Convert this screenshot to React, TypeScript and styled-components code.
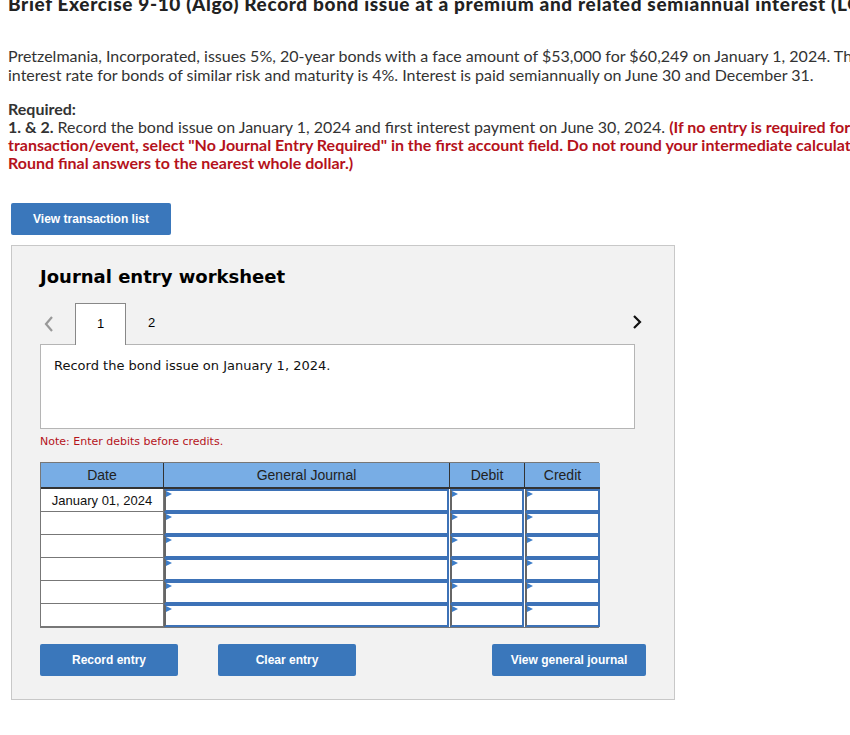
import React from "react";
import styled, { createGlobalStyle } from "styled-components";

const Global = createGlobalStyle`
  html, body { margin: 0; padding: 0; background: #fff; }
  body { overflow: hidden; }
`;

const Page = styled.div`
  width: 850px;
  height: 735px;
  overflow: hidden;
  padding: 0 0 0 8px;
  box-sizing: border-box;
  font-family: Lato, "Open Sans", sans-serif;
  color: #333;
`;

const Title = styled.h1`
  margin: -7px 0 0 0;
  font-family: Lato, sans-serif;
  font-size: 19px;
  font-weight: 900;
  letter-spacing: 0.65px;
  line-height: 22px;
  white-space: nowrap;
  color: #222;
`;

const Intro = styled.p`
  margin: 31px 0 0 0;
  font-size: 16px;
  line-height: 19px;
  white-space: nowrap;
  color: #333;
`;

const Required = styled.div`
  margin-top: 16px;
  font-size: 16px;
  line-height: 18px;
  white-space: nowrap;
  color: #333;
`;

const Strong = styled.span`
  font-weight: 700;
`;

const Red = styled.span`
  font-weight: 700;
  color: #b5121b;
`;

const BlueButton = styled.button<{ $w: number }>`
  display: inline-flex;
  align-items: center;
  justify-content: center;
  width: ${(p) => p.$w}px;
  height: 32px;
  padding: 0;
  border: none;
  border-radius: 2px;
  background: #3a77bb;
  color: #fff;
  font-family: "Liberation Sans", Arial, sans-serif;
  font-weight: 700;
  font-size: 12px;
  cursor: pointer;
`;

const TopButtonRow = styled.div`
  margin: 31px 0 0 3px;
`;

const Panel = styled.div`
  margin: 10px 0 0 3px;
  width: 664px;
  height: 455px;
  box-sizing: border-box;
  background: #f2f2f2;
  border: 1px solid #c8c8c8;
  padding: 17px 0 0 28px;
`;

const WsTitle = styled.h2`
  margin: 0;
  font-family: "DejaVu Sans", Verdana, sans-serif;
  font-weight: 700;
  font-size: 18px;
  line-height: 28px;
  color: #000;
`;

const TabRow = styled.div`
  margin-top: 12px;
  width: 607px;
  height: 41px;
  display: flex;
  align-items: stretch;
  position: relative;
`;

const Arrow = styled.div`
  width: 35px;
  display: flex;
  align-items: center;
  padding-left: 3px;
  box-sizing: border-box;
`;

const Tab = styled.div<{ $active?: boolean }>`
  width: 51px;
  box-sizing: border-box;
  display: flex;
  align-items: center;
  justify-content: center;
  font-family: "Liberation Sans", Arial, sans-serif;
  font-size: 13px;
  color: #000;
  padding-bottom: 3px;
  background: ${(p) => (p.$active ? "#fff" : "transparent")};
  border: ${(p) => (p.$active ? "1px solid #888" : "none")};
  border-bottom: none;
  margin-bottom: ${(p) => (p.$active ? "-1px" : "0")};
  position: relative;
  z-index: 1;
`;

const TabSpacer = styled.div`
  flex: 1;
`;

const RightArrow = styled.div`
  width: 20px;
  display: flex;
  align-items: center;
  justify-content: center;
  padding-bottom: 4px;
`;

const DescBox = styled.div`
  width: 595px;
  height: 85px;
  box-sizing: border-box;
  background: #fff;
  border: 1px solid #b5b5b5;
  padding: 13px 13px;
  font-family: "DejaVu Sans", Verdana, sans-serif;
  font-size: 13px;
  color: #111;
`;

const Note = styled.div`
  margin-top: 6px;
  font-family: "DejaVu Sans", Verdana, sans-serif;
  font-size: 11px;
  color: #b5121b;
`;

const Grid = styled.div`
  margin-top: 14px;
  width: 559px;
  box-sizing: border-box;
  display: grid;
  grid-template-columns: 123px 286px 75px 75px;
  grid-template-rows: 26px repeat(6, 23px);
  border: 1px solid #777;
  background: #fff;
  font-family: "Liberation Sans", Arial, sans-serif;
  font-size: 13px;
  color: #111;
`;

const HeadCell = styled.div<{ $last?: boolean }>`
  box-sizing: border-box;
  display: flex;
  align-items: center;
  justify-content: center;
  background: #78ade5;
  color: #222;
  font-size: 14px;
  border-bottom: 2px solid #333;
  border-right: ${(p) => (p.$last ? "none" : "1px solid #333")};
`;

const DateCell = styled.div`
  box-sizing: border-box;
  display: flex;
  align-items: center;
  justify-content: center;
  border-right: 1px solid #777;
  border-bottom: 1px solid #777;
`;

const InputCell = styled.div<{ $last?: boolean }>`
  position: relative;
  box-sizing: border-box;
  border: 2px solid #3d72b7;
  border-left-color: #666;
  margin-right: ${(p) => (p.$last ? "0" : "1px")};
  &::before {
    content: "";
    position: absolute;
    top: 0;
    left: 0;
    border-left: 6px solid #3d7dc8;
    border-top: 3px solid transparent;
    border-bottom: 3px solid transparent;
  }
`;

const BottomButtons = styled.div`
  margin-top: 16px;
  display: flex;
  gap: 40px;
`;

const PushRight = styled.div`
  margin-left: 96px;
`;

const Chevron = ({ color, dir }: { color: string; dir: "left" | "right" }) => (
  <svg width="12" height="18" viewBox="0 0 12 18">
    {dir === "left" ? (
      <polyline points="9,2 3,9 9,16" fill="none" stroke={color} strokeWidth="2.2" />
    ) : (
      <polyline points="3,3 9,9 3,15" fill="none" stroke={color} strokeWidth="2.2" />
    )}
  </svg>
);

const rows = ["January 01, 2024", "", "", "", "", ""];

export default function App() {
  return (
    <>
      <Global />
      <Page>
        <Title>Brief Exercise 9-10 (Algo) Record bond issue at a premium and related semiannual interest (LO</Title>
        <Intro>
          Pretzelmania, Incorporated, issues 5%, 20-year bonds with a face amount of $53,000 for $60,249 on January 1, 2024. The market
          <br />
          interest rate for bonds of similar risk and maturity is 4%. Interest is paid semiannually on June 30 and December 31.
        </Intro>
        <Required>
          <Strong>Required:</Strong>
          <br />
          <Strong>1. &amp; 2.</Strong> Record the bond issue on January 1, 2024 and first interest payment on June 30, 2024.{" "}
          <Red>(If no entry is required for a</Red>
          <br />
          <Red>transaction/event, select "No Journal Entry Required" in the first account field. Do not round your intermediate calculations.</Red>
          <br />
          <Red>Round final answers to the nearest whole dollar.)</Red>
        </Required>
        <TopButtonRow>
          <BlueButton $w={160}>View transaction list</BlueButton>
        </TopButtonRow>
        <Panel>
          <WsTitle>Journal entry worksheet</WsTitle>
          <TabRow>
            <Arrow>
              <Chevron color="#999" dir="left" />
            </Arrow>
            <Tab $active>1</Tab>
            <Tab>2</Tab>
            <TabSpacer />
            <RightArrow>
              <Chevron color="#111" dir="right" />
            </RightArrow>
          </TabRow>
          <DescBox>Record the bond issue on January 1, 2024.</DescBox>
          <Note>Note: Enter debits before credits.</Note>
          <Grid>
            <HeadCell>Date</HeadCell>
            <HeadCell>General Journal</HeadCell>
            <HeadCell>Debit</HeadCell>
            <HeadCell $last>Credit</HeadCell>
            {rows.map((d, i) => (
              <React.Fragment key={i}>
                <DateCell>{d}</DateCell>
                <InputCell />
                <InputCell />
                <InputCell $last />
              </React.Fragment>
            ))}
          </Grid>
          <BottomButtons>
            <BlueButton $w={138}>Record entry</BlueButton>
            <BlueButton $w={138}>Clear entry</BlueButton>
            <PushRight>
              <BlueButton $w={154}>View general journal</BlueButton>
            </PushRight>
          </BottomButtons>
        </Panel>
      </Page>
    </>
  );
}
